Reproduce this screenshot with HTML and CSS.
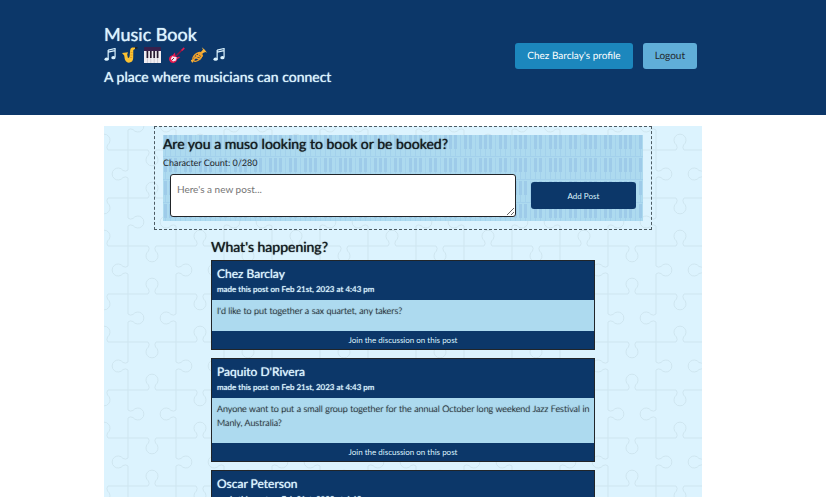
FILE: index.html
```html
<!DOCTYPE html>
<html lang="en">
<head>
<meta charset="utf-8">
<title>Music Book</title>
<link rel="stylesheet" href="styles.css">
</head>
<body>
<header class="site-header">
  <div class="header-inner">
    <div class="brand">
      <h1>Music Book</h1>
      <div class="instruments" aria-hidden="true">
        <svg class="note" viewBox="0 0 13 15"><path d="M4.5 2.2 12 .5V10M4.5 12V2.2M4.5 4.4 12 2.7" fill="none" stroke="#dcf3fe" stroke-width="1.3"/><ellipse cx="2.8" cy="12" rx="2.3" ry="1.8" fill="#dcf3fe"/><ellipse cx="10.2" cy="10.4" rx="2.3" ry="1.8" fill="#dcf3fe"/></svg>
        <svg class="sax" viewBox="0 0 16 16"><path d="M11 1.4 15.5 .8" stroke="#222" stroke-width="1.6"/><path d="M13 .6 10 .5Q8.4 1 8.2 3L7.6 9.3Q7 11.6 5.8 10.6L5.2 7.6 6 5.2 0 6 2.2 8.6 2.8 12.3Q4.2 16 7.6 15.6 11 15 11.2 11L11.3 3 13 2Z" fill="#fcc231"/><path d="M8.6 5.5h2M8.3 8h2.3M8 10.5h2.2" stroke="#dd9520" stroke-width=".8"/></svg>
        <svg class="piano" viewBox="0 0 17 16"><path d="M0 3h17v13H0z" fill="#f0edf2"/><path d="M0 0h17v4H0z" fill="#38204c"/><path d="M3.4 4v12M6.8 4v12M10.2 4v12M13.6 4v12" stroke="#b9b5bd" stroke-width=".6"/><path d="M3.4 4v7M6.8 4v7M10.2 4v7M13.6 4v7" stroke="#27192f" stroke-width="1.7"/></svg>
        <svg class="guitar" viewBox="0 0 16 16"><path d="M5 11 13 3" stroke="#8c1742" stroke-width="1.5"/><path d="m12 3 2.8-2.7 1 1.4L13.2 4Z" fill="#e51b50"/><path d="M6 5.6 3.6 8.2Q0 8.8 0 12.3.6 16 4.4 15.9 7.8 15.2 8 12.4L11.4 10 9.5 9.7 7.5 10.4 6.4 8.6Z" fill="#e51b50"/><path d="M3.2 9.2 7.8 10.2 7 13.6 4 14.4 1.8 12Z" fill="#f5e8f2"/><path d="m3 13 2-2" stroke="#7b2842"/></svg>
        <svg class="trumpet" viewBox="0 0 16 16"><path d="M1 14 12.8 3.4M3 9.7l6.4 2.9M4.8 8.1l6 2.8M6.8 6.2l5 3" stroke="#f2a22b" stroke-width="1.6"/><path d="M10.8.3 12 2.8Q11 5 8.6 6.4L9.9 8Q12 5.5 14.4 5L16 5.7 13.8 2.7Z" fill="#f9b43c"/><ellipse cx="6.4" cy="9.9" rx="5.3" ry="3.2" transform="rotate(-42 6.4 9.9)" fill="none" stroke="#f2a22b" stroke-width="1.5"/><path d="m.4 13 1.4 2.4" stroke="#f9b43c" stroke-width="1.5"/></svg>
        <svg class="note" viewBox="0 0 13 15"><path d="M4.5 2.2 12 .5V10M4.5 12V2.2M4.5 4.4 12 2.7" fill="none" stroke="#dcf3fe" stroke-width="1.3"/><ellipse cx="2.8" cy="12" rx="2.3" ry="1.8" fill="#dcf3fe"/><ellipse cx="10.2" cy="10.4" rx="2.3" ry="1.8" fill="#dcf3fe"/></svg>
      </div>
      <p class="tagline">A place where musicians can connect</p>
    </div>
    <nav class="actions">
      <a class="btn btn-profile" href="#profile">Chez Barclay's profile</a>
      <a class="btn btn-logout" href="#logout">Logout</a>
    </nav>
  </div>
</header>
<main>
  <div class="board">
    <section class="composer">
      <div class="composer-panel">
        <h2>Are you a muso looking to book or be booked?</h2>
        <p class="count">Character Count: 0/280</p>
        <form class="post-form">
          <textarea aria-label="New post" placeholder="Here's a new post..."></textarea>
          <button type="button">Add Post</button>
        </form>
      </div>
    </section>
    <section class="feed">
      <h2>What's happening?</h2>
      <article class="post">
        <header><h3>Chez Barclay</h3><p>made this post on Feb 21st, 2023 at 4:43 pm</p></header>
        <p class="post-text">I'd like to put together a sax quartet, any takers?</p>
        <a class="join" href="#post-1">Join the discussion on this post</a>
      </article>
      <article class="post">
        <header><h3>Paquito D'Rivera</h3><p>made this post on Feb 21st, 2023 at 4:43 pm</p></header>
        <p class="post-text">Anyone want to put a small group together for the annual October long weekend Jazz Festival in Manly, Australia?</p>
        <a class="join" href="#post-2">Join the discussion on this post</a>
      </article>
      <article class="post">
        <header><h3>Oscar Peterson</h3><p>made this post on Feb 21st, 2023 at 4:43 pm</p></header>
      </article>
    </section>
  </div>
</main>
</body>
</html>
```
FILE: styles.css
```css
* { box-sizing: border-box; }
html { scrollbar-width: none; }
body {
  margin: 0;
  background: #fff;
  color: #212529;
  font: 9px/14px Lato, "Liberation Sans", sans-serif;
  text-rendering: geometricPrecision;
}
h1, h2, h3, p { margin: 0; }
a { text-decoration: none; }
h1, h2, h3, .tagline, .post header p {
  font-weight: 400;
  text-shadow: 0 0 1px currentColor;
}

.site-header { background: #0c3769; color: #dcf3fe; padding: 24px 20px 27px 0; }
main { padding: 11px 20px 0 0; }
.header-inner {
  width: 74.2%;
  margin: 0 auto;
  padding-right: 5px;
  display: flex;
  justify-content: space-between;
}
h1 { font-size: 18px; line-height: 20px; }
.instruments { display: flex; align-items: center; height: 22px; }
.instruments svg { flex: none; height: 16px; }
.instruments .note { width: 12px; height: 14px; }
.sax { width: 16px; margin-left: 6px; }
.piano { width: 17px; margin-left: 6px; }
.guitar { width: 16px; margin: 0 6px 0 8px; }
.trumpet { width: 16px; margin-right: 6px; }
.tagline { font-size: 14px; line-height: 22px; }
.actions { display: flex; gap: 10px; align-items: center; }
.btn { border-radius: 3px; padding: 6px 12px; font-size: 10px; line-height: 14px; }
.btn-profile { background: #1c87bd; color: #fff; }
.btn-logout { background: #60aed8; color: #212529; }

.board {
  width: 74.2%;
  margin: 0 auto;
  background: #dcf3fe url("data:image/svg+xml,%3Csvg xmlns='http://www.w3.org/2000/svg' width='96' height='96' fill='none' stroke='%23cee5ef'%3E%3Cpath d='M-24 24h20q2-2 .5-5a6 6 0 1 1 7 0q-1.5 3 .5 5h20h20q2 2 .5 5a6 6 0 1 0 7 0q-1.5-3 .5-5h20h20q2-2 .5-5a6 6 0 1 1 7 0q-1.5 3 .5 5h20'/%3E%3Cpath d='M-24 72h20q2 2 .5 5a6 6 0 1 0 7 0q-1.5-3 .5-5h20h20q2-2 .5-5a6 6 0 1 1 7 0q-1.5 3 .5 5h20h20q2 2 .5 5a6 6 0 1 0 7 0q-1.5-3 .5-5h20'/%3E%3Cpath d='M24-24v20q2 2 5 .5a6 6 0 1 1 0 7q-3-1.5-5 .5v20v20q-2 2-5 .5a6 6 0 1 0 0 7q3-1.5 5 .5v20v20q2 2 5 .5a6 6 0 1 1 0 7q-3-1.5-5 .5v20'/%3E%3Cpath d='M72-24v20q-2 2-5 .5a6 6 0 1 0 0 7q3-1.5 5 .5v20v20q2 2 5 .5a6 6 0 1 1 0 7q-3-1.5-5 .5v20v20q-2 2-5 .5a6 6 0 1 0 0 7q3-1.5 5 .5v20'/%3E%3C/svg%3E");
}
.composer { width: 83.3%; margin: 0 auto; padding: 8px; border: 1px dashed #4c5a62; }
.composer-panel {
  height: 86px;
  background: #addaef url("data:image/svg+xml,%3Csvg xmlns='http://www.w3.org/2000/svg' width='35' height='23'%3E%3Cpath fill='%23a3d1ec' d='M0 0h1v21h-1zM5 0h1v21h-1zM10 0h1v21h-1zM15 0h1v21h-1zM20 0h1v21h-1zM25 0h1v21h-1zM30 0h1v21h-1zM0 21h35v1H0z'/%3E%3Cpath fill='%239ecbe9' d='M4 0h3v14h-3zM9 0h3v14h-3zM19 0h3v14h-3zM24 0h3v14h-3zM29 0h3v14h-3z'/%3E%3C/svg%3E") 17px 0;
}
h2 { font-size: 14px; line-height: 18px; color: #151b1f; }
.count { padding-top: 2px; line-height: 16px; }
.post-form { display: flex; align-items: center; gap: 15px; padding: 3px 7px 0; }
textarea {
  flex: 1;
  min-width: 0;
  height: 43px;
  padding: 7px 6px;
  border: 1px solid #212529;
  border-radius: 3px;
  background: #fff;
  color: #212529;
  font: inherit;
  font-size: 10px;
}
textarea::placeholder { color: #757575; }
button {
  flex: 0 0 22.6%;
  height: 27px;
  border: 0;
  border-radius: 3px;
  background: #0c3769;
  color: #dcf3fe;
  font: inherit;
  font-size: 8px;
}

.feed { width: 64.2%; margin: 0 auto; padding-top: 7px; }
.feed h2 { line-height: 20px; margin-bottom: 3px; }
.post { border: 1px solid #212529; margin-bottom: 8px; background: #addaef; }
.post header { background: #0c3769; color: #dcf3fe; padding: 4px 5px 3px; }
.post h3 { font-size: 12px; line-height: 17px; }
.post header p { font-size: 8px; line-height: 15px; }
.post-text {
  padding: 4px 0 13px 5px;
  line-height: 14px;
  font-weight: 300;
  color: #0c1013;
  text-shadow: 0 0 1px #212529;
}
.join {
  display: block;
  background: #0c3769;
  color: #dcf3fe;
  text-align: center;
  font-size: 8px;
  line-height: 18px;
}
```
